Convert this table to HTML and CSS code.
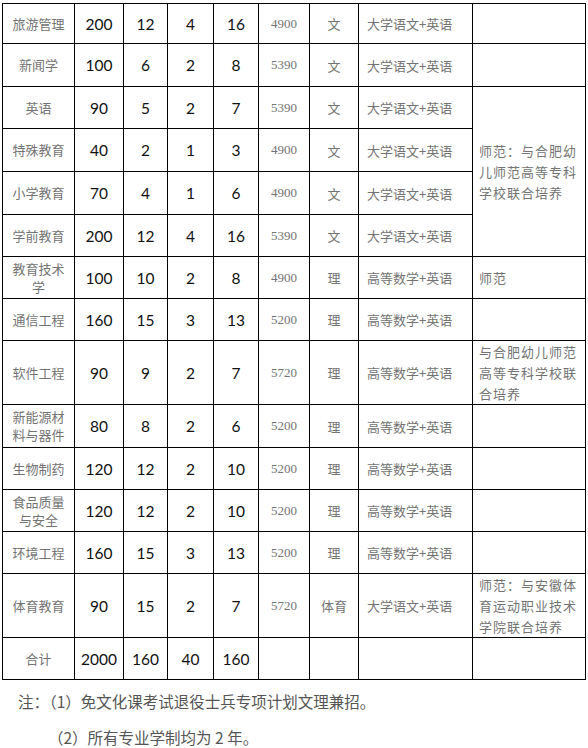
FILE: index.html
```html
<!DOCTYPE html>
<html lang="zh-CN">
<head>
<meta charset="utf-8">
<title>招生计划</title>
<link rel="stylesheet" href="styles.css">
</head>
<body>
<table class="plan">
  <colgroup>
    <col class="c-name"><col class="c-n1"><col class="c-n2"><col class="c-n3"><col class="c-n4">
    <col class="c-fee"><col class="c-type"><col class="c-exam"><col class="c-note">
  </colgroup>
  <tbody>
    <tr class="r41">
      <td class="name">旅游管理</td><td class="num">200</td><td class="num">12</td><td class="num">4</td><td class="num">16</td>
      <td class="fee">4900</td><td class="type">文</td><td class="exam">大学语文+英语</td><td class="note"></td>
    </tr>
    <tr class="r43">
      <td class="name">新闻学</td><td class="num">100</td><td class="num">6</td><td class="num">2</td><td class="num">8</td>
      <td class="fee">5390</td><td class="type">文</td><td class="exam">大学语文+英语</td><td class="note"></td>
    </tr>
    <tr class="r42">
      <td class="name">英语</td><td class="num">90</td><td class="num">5</td><td class="num">2</td><td class="num">7</td>
      <td class="fee">5390</td><td class="type">文</td><td class="exam">大学语文+英语</td>
      <td class="note" rowspan="4">师范：与合肥幼儿师范高等专科学校联合培养</td>
    </tr>
    <tr class="r43">
      <td class="name">特殊教育</td><td class="num">40</td><td class="num">2</td><td class="num">1</td><td class="num">3</td>
      <td class="fee">4900</td><td class="type">文</td><td class="exam">大学语文+英语</td>
    </tr>
    <tr class="r43">
      <td class="name">小学教育</td><td class="num">70</td><td class="num">4</td><td class="num">1</td><td class="num">6</td>
      <td class="fee">4900</td><td class="type">文</td><td class="exam">大学语文+英语</td>
    </tr>
    <tr class="r42">
      <td class="name">学前教育</td><td class="num">200</td><td class="num">12</td><td class="num">4</td><td class="num">16</td>
      <td class="fee">5390</td><td class="type">文</td><td class="exam">大学语文+英语</td>
    </tr>
    <tr class="r42">
      <td class="name">教育技术学</td><td class="num">100</td><td class="num">10</td><td class="num">2</td><td class="num">8</td>
      <td class="fee">4900</td><td class="type">理</td><td class="exam">高等数学+英语</td><td class="note">师范</td>
    </tr>
    <tr class="r42">
      <td class="name">通信工程</td><td class="num">160</td><td class="num">15</td><td class="num">3</td><td class="num">13</td>
      <td class="fee">5200</td><td class="type">理</td><td class="exam">高等数学+英语</td><td class="note"></td>
    </tr>
    <tr class="r62">
      <td class="name">软件工程</td><td class="num">90</td><td class="num">9</td><td class="num">2</td><td class="num">7</td>
      <td class="fee">5720</td><td class="type">理</td><td class="exam">高等数学+英语</td><td class="note">与合肥幼儿师范高等专科学校联合培养</td>
    </tr>
    <tr class="r43">
      <td class="name">新能源材料与器件</td><td class="num">80</td><td class="num">8</td><td class="num">2</td><td class="num">6</td>
      <td class="fee">5200</td><td class="type">理</td><td class="exam">高等数学+英语</td><td class="note"></td>
    </tr>
    <tr class="r42">
      <td class="name">生物制药</td><td class="num">120</td><td class="num">12</td><td class="num">2</td><td class="num">10</td>
      <td class="fee">5200</td><td class="type">理</td><td class="exam">高等数学+英语</td><td class="note"></td>
    </tr>
    <tr class="r42">
      <td class="name">食品质量与安全</td><td class="num">120</td><td class="num">12</td><td class="num">2</td><td class="num">10</td>
      <td class="fee">5200</td><td class="type">理</td><td class="exam">高等数学+英语</td><td class="note"></td>
    </tr>
    <tr class="r42">
      <td class="name">环境工程</td><td class="num">160</td><td class="num">15</td><td class="num">3</td><td class="num">13</td>
      <td class="fee">5200</td><td class="type">理</td><td class="exam">高等数学+英语</td><td class="note"></td>
    </tr>
    <tr class="r64">
      <td class="name">体育教育</td><td class="num">90</td><td class="num">15</td><td class="num">2</td><td class="num">7</td>
      <td class="fee">5720</td><td class="type">体育</td><td class="exam">大学语文+英语</td><td class="note">师范：与安徽体育运动职业技术学院联合培养</td>
    </tr>
    <tr class="r42">
      <td class="name">合计</td><td class="num">2000</td><td class="num">160</td><td class="num">40</td><td class="num">160</td>
      <td class="fee"></td><td class="type"></td><td class="exam"></td><td class="note"></td>
    </tr>
  </tbody>
</table>
<div class="notes">
  <p class="note-line first">注：（1）免文化课考试退役士兵专项计划文理兼招。</p>
  <p class="note-line second">（2）所有专业学制均为 2 年。</p>
</div>
</body>
</html>
```
FILE: styles.css
```css
html, body {
  margin: 0;
  padding: 0;
  background: #ffffff;
}

body {
  padding: 3px 0 0 2px;
  font-family: "Noto Sans CJK SC", sans-serif;
}

.plan {
  border-collapse: collapse;
  table-layout: fixed;
  width: 584px;
}

.c-name { width: 72px; }
.c-n1 { width: 49px; }
.c-n2 { width: 44px; }
.c-n3 { width: 46px; }
.c-n4 { width: 45px; }
.c-fee { width: 51px; }
.c-type { width: 49px; }
.c-exam { width: 114px; }
.c-note { width: 113px; }

.plan td {
  border: 1px solid #000;
  padding: 0;
  vertical-align: middle;
}

.r41 td { height: 39px; }
.r42 td { height: 41px; }
.r43 td { height: 42px; }
.r62 td { height: 61px; }
.r64 td { height: 63px; }

.name {
  text-align: center;
  font-size: 13px;
  line-height: 18px;
  color: #737373;
  padding: 0 6px !important;
}

.num {
  text-align: center;
  font-family: "Lato", "Liberation Sans", sans-serif;
  font-size: 15.5px;
  color: #111;
}

.fee {
  font-family: "Liberation Serif", serif;
  font-size: 13px;
  color: #737373;
  text-align: center;
}

.type {
  text-align: center;
  font-size: 13px;
  color: #737373;
}

.exam {
  text-align: left;
  font-size: 13px;
  color: #737373;
  padding: 0 0 0 8px !important;
  white-space: nowrap;
}

.note {
  text-align: left;
  font-size: 13px;
  letter-spacing: 1px;
  line-height: 21px;
  color: #737373;
  padding: 0 6px 0 6px !important;
}

.notes {
  margin-top: 3px;
  color: #555;
  font-size: 15.5px;
  line-height: 36px;
}

.note-line {
  margin: 0;
}

.note-line.first {
  padding-left: 16px;
}

.note-line.second {
  padding-left: 46px;
}
```
